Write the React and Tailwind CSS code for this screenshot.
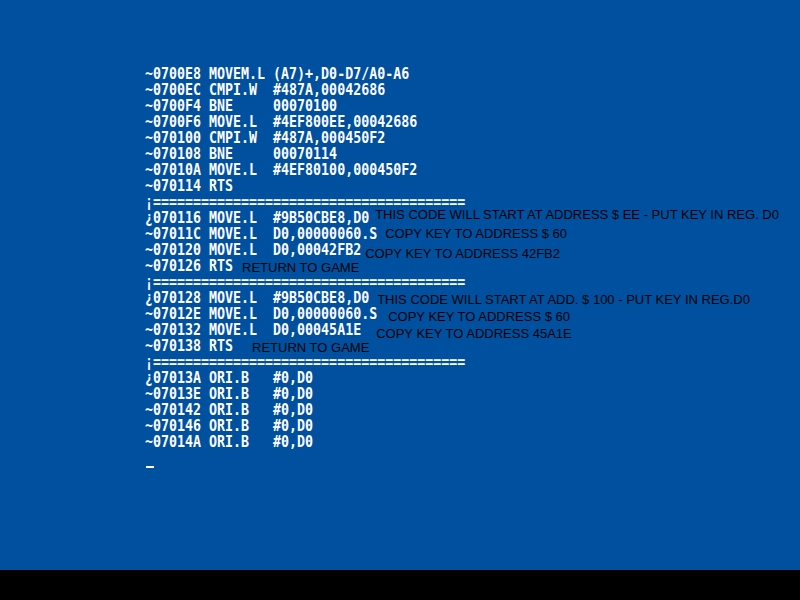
// Monitor listing with annotations
const SEP = '¡' + '='.repeat(39);

const rows = [
  { code: '~0700E8 MOVEM.L (A7)+,D0-D7/A0-A6' },
  { code: '~0700EC CMPI.W  #487A,00042686' },
  { code: '~0700F4 BNE     00070100' },
  { code: '~0700F6 MOVE.L  #4EF800EE,00042686' },
  { code: '~070100 CMPI.W  #487A,000450F2' },
  { code: '~070108 BNE     00070114' },
  { code: '~07010A MOVE.L  #4EF80100,000450F2' },
  { code: '~070114 RTS' },
  { code: SEP },
  {
    code: '¿070116 MOVE.L  #9B50CBE8,D0',
    note: 'THIS CODE WILL START AT ADDRESS $ EE - PUT KEY IN REG. D0',
    noteClass: 'ml-[6px] translate-y-[-3px]',
  },
  {
    code: '~07011C MOVE.L  D0,00000060.S',
    note: 'COPY KEY TO ADDRESS $ 60',
    noteClass: 'ml-[8px] translate-y-[0px]',
  },
  {
    code: '~070120 MOVE.L  D0,00042FB2',
    note: 'COPY KEY TO ADDRESS 42FB2',
    noteClass: 'ml-[4px] translate-y-[4px]',
  },
  {
    code: '~070126 RTS',
    note: 'RETURN TO GAME',
    noteClass: 'ml-[9px] translate-y-[2px]',
  },
  { code: SEP },
  {
    code: '¿070128 MOVE.L  #9B50CBE8,D0',
    note: 'THIS CODE WILL START AT ADD. $ 100 - PUT KEY IN REG.D0',
    noteClass: 'ml-[8px] translate-y-[2px]',
  },
  {
    code: '~07012E MOVE.L  D0,00000060.S',
    note: 'COPY KEY TO ADDRESS $ 60',
    noteClass: 'ml-[11px] translate-y-[3px]',
  },
  {
    code: '~070132 MOVE.L  D0,00045A1E',
    note: 'COPY KEY TO ADDRESS 45A1E',
    noteClass: 'ml-[15px] translate-y-[4px]',
  },
  {
    code: '~070138 RTS',
    note: 'RETURN TO GAME',
    noteClass: 'ml-[19px] translate-y-[2px]',
  },
  { code: SEP },
  { code: '¿07013A ORI.B   #0,D0' },
  { code: '~07013E ORI.B   #0,D0' },
  { code: '~070142 ORI.B   #0,D0' },
  { code: '~070146 ORI.B   #0,D0' },
  { code: '~07014A ORI.B   #0,D0' },
  { code: '' },
];

const App = () => {
  return (
    <div className="w-[800px] h-[600px] flex flex-col bg-black overflow-hidden">
      {/* Screen */}
      <div className="h-[570px] bg-[#0050a0] pl-[145px] pt-[66px]">
        {rows.map((row, i) => (
          <div key={i} className="flex items-start h-4">
            <span
              className="inline-block whitespace-pre text-white font-bold text-[13.3px] leading-[12.8px] origin-top scale-y-[1.25]"
              style={{ fontFamily: '"DejaVu Sans Mono", "Liberation Mono", monospace' }}
            >
              {row.code}
            </span>
            {row.note && (
              <span
                className={`whitespace-pre text-black text-[13px] leading-4 ${row.noteClass}`}
                style={{ fontFamily: '"Liberation Sans", Arial, sans-serif' }}
              >
                {row.note}
              </span>
            )}
          </div>
        ))}
        {/* Cursor */}
        <div className="w-[8px] h-[2px] ml-[1px] bg-white" />
      </div>
      {/* Bottom border */}
      <div className="h-[30px] bg-black" />
    </div>
  );
};

export default App;
